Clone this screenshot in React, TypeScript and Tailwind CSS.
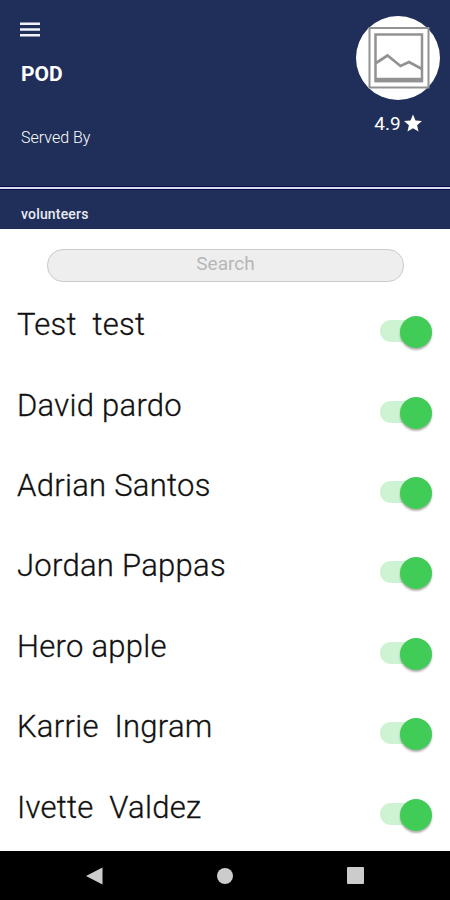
const volunteers = [
  'Test  test',
  'David pardo',
  'Adrian Santos',
  'Jordan Pappas',
  'Hero apple',
  'Karrie  Ingram',
  'Ivette  Valdez',
];

function Toggle() {
  return (
    <button type="button" role="switch" aria-checked="true" className="flex h-8 w-[51.5px] items-center">
      <span className="h-[22px] w-[36px] shrink-0 -translate-y-px rounded-l-full bg-[#cdf3d2]" />
      <span className="relative -ml-[16.5px] size-8 shrink-0 rounded-full bg-[#41cc57] shadow-[0_2px_2px_rgba(0,0,0,0.3)]" />
    </button>
  );
}

function Avatar() {
  return (
    <div className="flex size-[84px] items-center justify-center rounded-full bg-white">
      <svg width="84" height="84" viewBox="356 16 84 84" fill="none" stroke="#929292">
        <path d="M369.500 28H428.500V87.500H369.500Z" strokeWidth="2" />
        <path d="M375.500 34.500H422V81H375.500Z" strokeWidth="2.500" />
        <path d="M375 80H423" strokeWidth="4.500" />
        <path d="M376 63L387.500 55.500L400.500 66L409 62L422 69" strokeWidth="2.700" />
      </svg>
    </div>
  );
}

export default function App() {
  return (
    <div className="flex h-[900px] w-[450px] flex-col overflow-hidden bg-white font-['Roboto',sans-serif]">
      <header className="flex h-[186px] shrink-0 justify-between bg-[#202f59] text-white">
        <div className="flex flex-col pl-5">
          <svg className="mt-[22px]" width="20" height="15" viewBox="0 0 20 15" fill="#f3f3fb">
            <path d="M0 .5H20V3H0ZM0 6.300H20V8.800H0ZM0 12H20V14.500H0Z" />
          </svg>
          <h1 className="ml-[1px] mt-[25px] text-[21px] leading-6 font-bold">POD</h1>
          <p className="ml-[1px] mt-[42px] text-[16px] leading-5 font-light">Served By</p>
        </div>
        <div className="mr-[10px] flex w-[84px] flex-col items-center pt-4">
          <Avatar />
          <div className="mt-[12px] flex items-center gap-[3px] text-[19px] leading-6">
            <span>4.9</span>
            <svg className="-mt-[2px]" width="18" height="18" viewBox="2 2 20 19" fill="white">
              <path d="M12 17.270L18.180 21l-1.640-7.030L22 9.240l-7.190-.61L12 2 9.190 8.630 2 9.240l5.460 4.730L5.820 21z" />
            </svg>
          </div>
        </div>
      </header>
      <div className="h-[43px] shrink-0 border-t border-[#090b45] bg-[#202f59]">
        <div className="h-[2px] bg-[#d9daf2]" />
        <div className="h-px bg-[#090b45]" />
        <p className="ml-[21px] mt-[14px] text-[14px] leading-5 font-medium tracking-[0.18px] text-[#e9ebf3]">volunteers</p>
      </div>
      <input
        aria-label="Search"
        placeholder="Search"
        className="ml-[47px] mt-5 h-[33px] w-[357px] shrink-0 rounded-[16px] border border-[#cbcbcb] bg-[#eeeeee] pb-[4px] text-center text-[19px] placeholder:text-[#b7b7b7]"
      />
      <main className="flex grow flex-col overflow-hidden pt-[10px]">
        {volunteers.map((name) => (
          <div key={name} className="flex h-[80.4px] shrink-0 items-center justify-between pl-[17px] pr-[18.5px]">
            <span className="-mt-[14px] text-[31px] leading-10 font-light tracking-[0.28px] whitespace-pre text-[#111111] [-webkit-text-stroke:0.3px_#111111]">{name}</span>
            <Toggle />
          </div>
        ))}
      </main>
      <nav className="flex h-[49px] shrink-0 items-center bg-black">
        <svg className="ml-[86px]" width="17" height="18" fill="#cccccc">
          <path d="M0 9L16.500 .5V17.500Z" />
        </svg>
        <div className="ml-[114px] size-4 rounded-full bg-[#cccccc]" />
        <div className="ml-[114px] size-[17px] rounded-[1px] bg-[#cccccc]" />
      </nav>
    </div>
  );
}
